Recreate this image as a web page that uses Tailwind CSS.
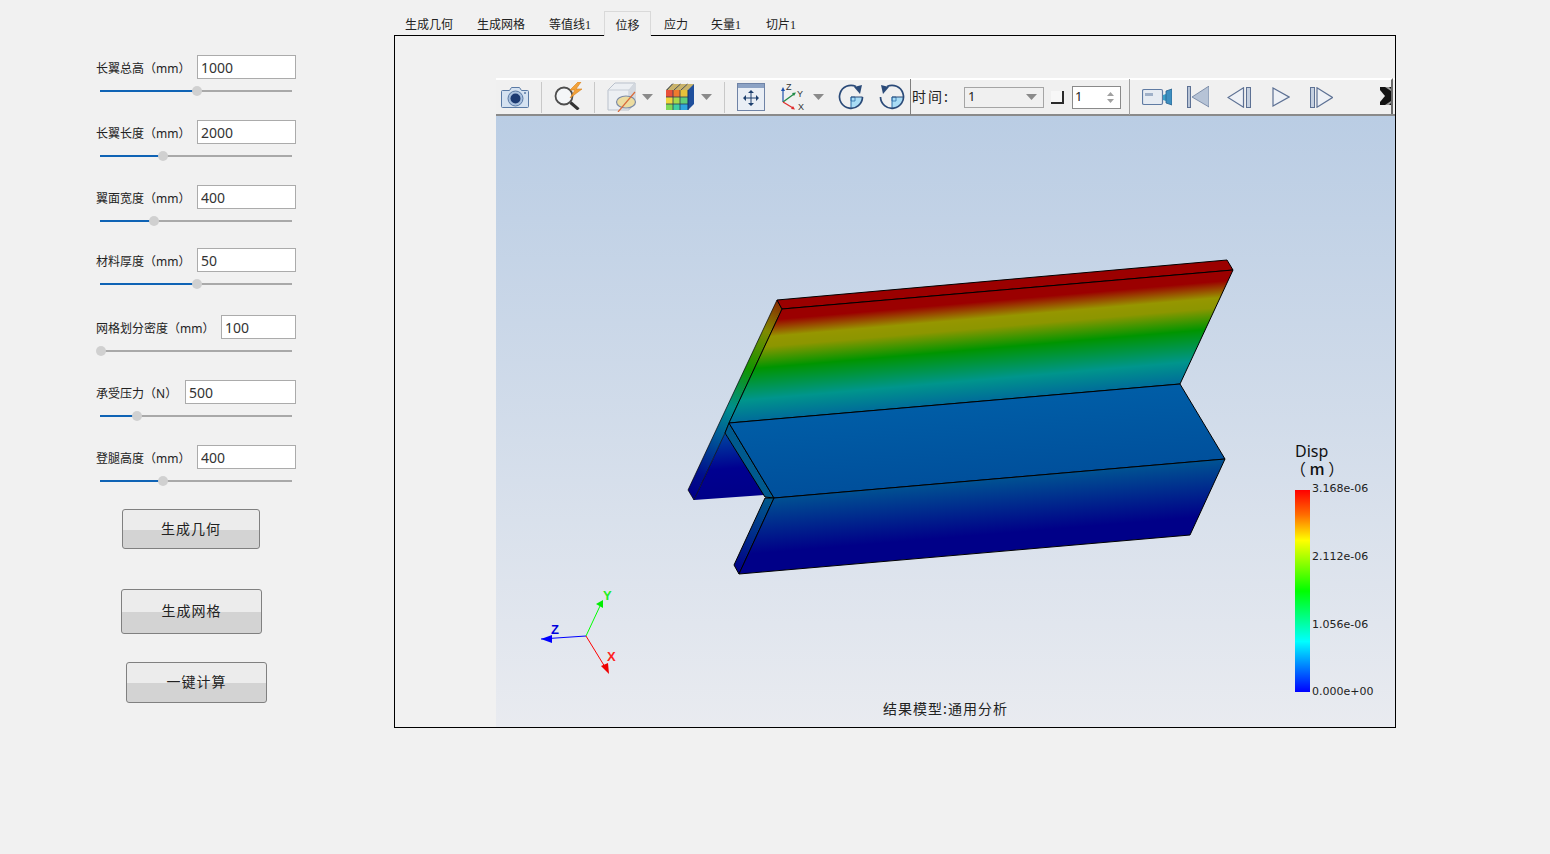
<!DOCTYPE html>
<html lang="zh">
<head>
<meta charset="utf-8">
<script src="https://cdn.jsdelivr.net/npm/@tailwindcss/browser@4"></script>
</head>
<body class="m-0 w-[1550px] h-[854px] overflow-hidden bg-[#f1f1f1] text-[#222] font-['Noto_Sans_CJK_SC','Noto_Sans',sans-serif]">
<div class="flex h-full">
  <!-- left form -->
  <aside class="w-[394px] shrink-0 pt-[55px] pl-[96px]">
    <div class="w-[200px] flex flex-col">
      <div class="h-[48px]">
        <div class="h-[24px] flex items-center justify-between"><span class="text-[12px] pt-[2px]">长翼总高（<span class="font-['Noto_Sans']">mm</span>）</span><input readonly value="1000" class="w-[99px] h-[24px] border border-[#ababab] bg-white pl-[3px] text-[14px] text-[#333] font-['Noto_Sans'] outline-none"></div>
        <div class="relative h-[24px] ml-[4px] w-[192px] flex items-center"><div class="h-[2px] w-[97px] bg-[#0f63b5]"></div><div class="h-[2px] flex-1 bg-[#a9a9a9]"></div><div class="absolute left-[92px] top-[7px] size-[10px] rounded-full bg-[#d0d0d0]"></div></div>
      </div>
      <div class="h-[48px] mt-[17px]">
        <div class="h-[24px] flex items-center justify-between"><span class="text-[12px] pt-[2px]">长翼长度（<span class="font-['Noto_Sans']">mm</span>）</span><input readonly value="2000" class="w-[99px] h-[24px] border border-[#ababab] bg-white pl-[3px] text-[14px] text-[#333] font-['Noto_Sans'] outline-none"></div>
        <div class="relative h-[24px] ml-[4px] w-[192px] flex items-center"><div class="h-[2px] w-[63px] bg-[#0f63b5]"></div><div class="h-[2px] flex-1 bg-[#a9a9a9]"></div><div class="absolute left-[58px] top-[7px] size-[10px] rounded-full bg-[#d0d0d0]"></div></div>
      </div>
      <div class="h-[48px] mt-[17px]">
        <div class="h-[24px] flex items-center justify-between"><span class="text-[12px] pt-[2px]">翼面宽度（<span class="font-['Noto_Sans']">mm</span>）</span><input readonly value="400" class="w-[99px] h-[24px] border border-[#ababab] bg-white pl-[3px] text-[14px] text-[#333] font-['Noto_Sans'] outline-none"></div>
        <div class="relative h-[24px] ml-[4px] w-[192px] flex items-center"><div class="h-[2px] w-[54px] bg-[#0f63b5]"></div><div class="h-[2px] flex-1 bg-[#a9a9a9]"></div><div class="absolute left-[49px] top-[7px] size-[10px] rounded-full bg-[#d0d0d0]"></div></div>
      </div>
      <div class="h-[48px] mt-[15px]">
        <div class="h-[24px] flex items-center justify-between"><span class="text-[12px] pt-[2px]">材料厚度（<span class="font-['Noto_Sans']">mm</span>）</span><input readonly value="50" class="w-[99px] h-[24px] border border-[#ababab] bg-white pl-[3px] text-[14px] text-[#333] font-['Noto_Sans'] outline-none"></div>
        <div class="relative h-[24px] ml-[4px] w-[192px] flex items-center"><div class="h-[2px] w-[97px] bg-[#0f63b5]"></div><div class="h-[2px] flex-1 bg-[#a9a9a9]"></div><div class="absolute left-[92px] top-[7px] size-[10px] rounded-full bg-[#d0d0d0]"></div></div>
      </div>
      <div class="h-[48px] mt-[19px]">
        <div class="h-[24px] flex items-center justify-between"><span class="text-[12px] pt-[2px]">网格划分密度（<span class="font-['Noto_Sans']">mm</span>）</span><input readonly value="100" class="w-[75px] h-[24px] border border-[#ababab] bg-white pl-[3px] text-[14px] text-[#333] font-['Noto_Sans'] outline-none"></div>
        <div class="relative h-[24px] ml-[4px] w-[192px] flex items-center"><div class="h-[2px] flex-1 bg-[#a9a9a9]"></div><div class="absolute left-[-4px] top-[7px] size-[10px] rounded-full bg-[#d0d0d0]"></div></div>
      </div>
      <div class="h-[48px] mt-[17px]">
        <div class="h-[24px] flex items-center justify-between"><span class="text-[12px] pt-[2px]">承受压力（<span class="font-['Noto_Sans']">N</span>）</span><input readonly value="500" class="w-[111px] h-[24px] border border-[#ababab] bg-white pl-[3px] text-[14px] text-[#333] font-['Noto_Sans'] outline-none"></div>
        <div class="relative h-[24px] ml-[4px] w-[192px] flex items-center"><div class="h-[2px] w-[37px] bg-[#0f63b5]"></div><div class="h-[2px] flex-1 bg-[#a9a9a9]"></div><div class="absolute left-[32px] top-[7px] size-[10px] rounded-full bg-[#d0d0d0]"></div></div>
      </div>
      <div class="h-[48px] mt-[17px]">
        <div class="h-[24px] flex items-center justify-between"><span class="text-[12px] pt-[2px]">登腿高度（<span class="font-['Noto_Sans']">mm</span>）</span><input readonly value="400" class="w-[99px] h-[24px] border border-[#ababab] bg-white pl-[3px] text-[14px] text-[#333] font-['Noto_Sans'] outline-none"></div>
        <div class="relative h-[24px] ml-[4px] w-[192px] flex items-center"><div class="h-[2px] w-[63px] bg-[#0f63b5]"></div><div class="h-[2px] flex-1 bg-[#a9a9a9]"></div><div class="absolute left-[58px] top-[7px] size-[10px] rounded-full bg-[#d0d0d0]"></div></div>
      </div>
      <button class="mt-[16px] ml-[26px] w-[138px] h-[40px] pb-[2px] rounded-[3px] border border-[#808080] bg-[linear-gradient(#ececec_0,#ececec_52%,#d3d3d3_52%,#d3d3d3_100%)] text-[14px] tracking-[1px] text-[#222]">生成几何</button>
      <button class="mt-[40px] ml-[25px] w-[141px] h-[45px] pb-[2px] rounded-[3px] border border-[#808080] bg-[linear-gradient(#ececec_0,#ececec_51%,#d3d3d3_51%,#d3d3d3_100%)] text-[14px] tracking-[1px] text-[#222]">生成网格</button>
      <button class="mt-[28px] ml-[30px] w-[141px] h-[41px] pb-[2px] rounded-[3px] border border-[#808080] bg-[linear-gradient(#ececec_0,#ececec_52%,#d3d3d3_52%,#d3d3d3_100%)] text-[14px] tracking-[1px] text-[#222]">一键计算</button>
    </div>
  </aside>

  <!-- right side -->
  <main class="w-[1002px] shrink-0 pt-[11px] flex flex-col">
    <nav class="flex h-[25px] text-[12px] leading-[25px] relative z-10">
      <span class="pl-[11px] pr-3">生成几何</span>
      <span class="px-3">生成网格</span>
      <span class="pl-3 pr-[13px]">等值线<span class="font-['Liberation_Serif']">1</span></span>
      <span class="w-[47px] h-[25px] text-center border border-b-0 border-[#d9d9d9] bg-[#f1f1f1]">位移</span>
      <span class="pl-3 pr-[11px] ml-[1px]">应力</span>
      <span class="pl-3 pr-[13px]">矢量<span class="font-['Liberation_Serif']">1</span></span>
      <span class="px-3">切片<span class="font-['Liberation_Serif']">1</span></span>
    </nav>
    <section class="-mt-[1px] h-[693px] border border-black pl-[101px] flex flex-col justify-end">
      <!-- toolbar -->
      <div class="h-[38px] w-[899px] flex bg-[#f0f0f0] border-t-2 border-t-white border-b-2 border-b-[#8a8a8a] items-center shrink-0">
        <svg class="ml-[5px] shrink-0" width="28" height="24" viewBox="0 0 28 24"><path d="M1 5.500h7l2-3h8l2 3h6a1 1 0 0 1 1 1v15a1 1 0 0 1-1 1H1a1 1 0 0 1-1-1v-15a1 1 0 0 1 1-1z" transform="translate(.5 0)" fill="#d5e2f1" stroke="#5a7aa5"/><circle cx="14.500" cy="13.500" r="7.500" fill="#a9c0de" stroke="#5a7aa5"/><circle cx="14.500" cy="13.500" r="5" fill="#1c3a72"/><circle cx="24" cy="8" r="1" fill="#5a7aa5"/></svg>
        <div class="ml-[12px] w-[1px] h-[31px] bg-[#c8c8c8] shrink-0"></div>
        <svg class="ml-[10px] mt-[-2px] shrink-0" width="31" height="28" viewBox="0 0 31 28"><circle cx="12" cy="14" r="8.500" fill="#f4f6f8" stroke="#4d4d4d" stroke-width="1.800"/><path d="M18.500 20.500l8 7" stroke="#333" stroke-width="3"/><path d="M26 0l-8 8h5l-5 8 12-9h-6l5-7z" fill="#f2a23a" stroke="#d97f17" stroke-width=".6"/></svg>
        <div class="ml-[11px] w-[1px] h-[31px] bg-[#c8c8c8] shrink-0"></div>
        <svg class="ml-[12px] shrink-0" width="31" height="30" viewBox="0 0 31 30"><path d="M1 8l7-7h20v20l-6 7H1z" fill="#eceff3" stroke="#b9c1cc"/><path d="M1 8h21v20M22 8l6-7" fill="none" stroke="#c6ccd5"/><path d="M22 8l6-7v20l-6 7z" fill="#d3d8df"/><ellipse cx="19" cy="20" rx="9.500" ry="6" fill="#ecdca0" stroke="#7c8ba6" stroke-width="1.200"/><path d="M11 30L28 10" stroke="#d96a3a" stroke-width="1.200"/></svg>
        <svg class="ml-[4px] shrink-0" width="11" height="6" viewBox="0 0 11 6"><path d="M0 0h11l-5.500 6z" fill="#8a8a8a"/></svg>
        <svg class="ml-[13px] shrink-0" width="28" height="28" viewBox="0 0 28 28"><path d="M0 7l6-6h22v20l-6 6H0z" fill="#1f4f9c"/><path d="M0 7h7v7H0z" fill="#e8503a"/><path d="M7 7h7v7H7z" fill="#ef7a2e"/><path d="M14 7h8v7h-8z" fill="#e8c23a"/><path d="M0 14h7v7H0z" fill="#f0d53c"/><path d="M7 14h7v7H7z" fill="#a6d94b"/><path d="M14 14h8v7h-8z" fill="#5fcf7a"/><path d="M0 21h7v6H0z" fill="#7ed957"/><path d="M7 21h7v6H7z" fill="#3fcfa2"/><path d="M14 21h8v6h-8z" fill="#2ea6df"/><path d="M0 7l6-6h22l-6 6z" fill="#c9b36b"/><path d="M7 .500L1 7M14.500 1L8 7M21.500 1L15 7M0 14h22M0 21h22M7 7v20M14 7v20" stroke="#2d3a55" stroke-width=".8" fill="none"/><path d="M22 7v20" stroke="#10306b"/></svg>
        <svg class="ml-[7px] shrink-0" width="11" height="6" viewBox="0 0 11 6"><path d="M0 0h11l-5.500 6z" fill="#8a8a8a"/></svg>
        <div class="ml-[12px] w-[1px] h-[31px] bg-[#c8c8c8] shrink-0"></div>
        <svg class="ml-[12px] shrink-0" width="28" height="28" viewBox="0 0 28 28"><rect x=".5" y=".5" width="27" height="27" fill="#e9eef5" stroke="#6f83a6"/><rect x="1" y="1" width="26" height="4" fill="#8ca2c4"/><path d="M14 8v14M8 15h12" stroke="#1d3f6e"/><path d="M14 7l-3 3h6zM14 23l-3-3h6zM6 15l3-3v6zM22 15l-3-3v6z" fill="#1d3f6e"/></svg>
        <svg class="ml-[16px] shrink-0" width="24" height="28" viewBox="0 0 24 28"><path d="M2 19V7" stroke="#1f53ad" stroke-width="1.200"/><path d="M2 4L0 8h4z" fill="#1f53ad"/><path d="M2 19l11-8" stroke="#1f8a45" stroke-width="1.200"/><path d="M15 9.500l-4 .5 2 3z" fill="#1f8a45"/><path d="M2 19l10 6" stroke="#e02c2c" stroke-width="1.200"/><path d="M14 26.500l-4-.5 2-3z" fill="#e02c2c"/><text x="5" y="7" font-size="9" font-family="Liberation Sans" fill="#333">Z</text><text x="16" y="14" font-size="9" font-family="Liberation Sans" fill="#333">Y</text><text x="17" y="27" font-size="9" font-family="Liberation Sans" fill="#333">X</text></svg>
        <svg class="ml-[8px] shrink-0" width="11" height="6" viewBox="0 0 11 6"><path d="M0 0h11l-5.500 6z" fill="#8a8a8a"/></svg>
        <svg class="ml-[14px] shrink-0" width="26" height="26" viewBox="0 0 26 26"><path d="M13 13h11a11 11 0 0 1-11 11z" fill="#a9dcf5"/><path d="M13 13h4v4h-4z" fill="none" stroke="#2f6fa8" stroke-width=".8"/><path d="M13 13v11" stroke="#2f6fa8"/><path d="M18 2.500A11.500 11.500 0 1 0 24.500 13" fill="none" stroke="#2a4a78" stroke-width="1.700"/><path d="M13 13h11.500" stroke="#2a4a78"/><path d="M24 1l-2 9-6-7z" fill="#2a4a78"/></svg>
        <svg class="ml-[15px] shrink-0" width="26" height="26" viewBox="0 0 26 26"><path d="M13 13h11a11 11 0 0 1-11 11z" fill="#a9dcf5"/><path d="M13 13h4v4h-4z" fill="none" stroke="#2f6fa8" stroke-width=".8"/><path d="M13 13v11" stroke="#2f6fa8"/><path d="M8 2.500A11.500 11.500 0 1 1 1.500 13" fill="none" stroke="#2a4a78" stroke-width="1.700"/><path d="M13 13h11.500" stroke="#2a4a78"/><path d="M2 1l2 9 6-7z" fill="#2a4a78"/></svg>
        <div class="ml-[5px] w-[1px] h-[36px] bg-[#7f7f7f] shrink-0"></div>
        <span class="ml-[1px] w-[37px] text-[14px] tracking-[2px] leading-[20px] -mt-[2px] whitespace-nowrap shrink-0">时间:</span>
        <div class="ml-[15px] w-[80px] h-[21px] border border-[#a5a5a5] bg-[#f0f0f0] flex items-center justify-between pl-[3px] pr-[6px] text-[13px] font-['Noto_Sans'] shrink-0"><span>1</span><svg width="11" height="6" viewBox="0 0 11 6"><path d="M0 0h11l-5.500 6z" fill="#8a8a8a"/></svg></div>
        <div class="ml-[7px] w-[13px] h-[13px] border-r-2 border-b-2 border-[#2a2a2a] bg-[#f7f7f7] shrink-0"></div>
        <div class="ml-[8px] w-[49px] h-[23px] border border-[#8a8a8a] bg-white flex items-center justify-between pl-[2px] pr-[6px] text-[13px] font-['Noto_Sans'] shrink-0"><span>1</span><svg width="7" height="11" viewBox="0 0 7 11"><path d="M3.500 0L7 4H0zM3.500 11L0 7h7z" fill="#a0a0a0"/></svg></div>
        <div class="ml-[8px] w-[1px] h-[36px] bg-[#a0a0a0] shrink-0"></div>
        <div class="relative ml-[8px] h-[36px] w-[255px] shrink-0 flex items-center border-t-2 border-t-white border-r-2 border-r-[#6a6a6a] -mt-[2px]">
          <svg class="ml-[4px] shrink-0" width="30" height="18" viewBox="0 0 30 18"><rect x=".5" y="1.500" width="20" height="15" rx="1.500" fill="#e6ebf2" stroke="#5f7ba3" stroke-width="1.200"/><rect x="3" y="5" width="8" height="3" fill="#9fb0c8"/><path d="M21 7l3-1v7l-3-1z" fill="#3aa0c9"/><path d="M24 3l6-2v16l-6-2z" fill="#3d8fc0" stroke="#2a5f8d" stroke-width=".8"/></svg>
          <svg class="ml-[15px] shrink-0" width="22" height="22" viewBox="0 0 22 22"><rect x=".5" y=".5" width="3" height="21" fill="#b8c4d6" stroke="#5d7194"/><path d="M22 0v21L5 11z" fill="#b6c3d6" stroke="#5d7194" stroke-width=".7"/></svg>
          <svg class="ml-[18px] shrink-0" width="24" height="21" viewBox="0 0 24 21"><path d="M16.500 .8v19.400L1 10.500z" fill="#eef1f6" stroke="#5d7194" stroke-width="1.200"/><rect x="19.500" y=".5" width="4" height="20" fill="#c5d0e0" stroke="#5d7194"/></svg>
          <svg class="ml-[21px] shrink-0" width="18" height="20" viewBox="0 0 18 20"><path d="M1 1v18l16-9z" fill="#eef1f6" stroke="#5d7194" stroke-width="1.200"/></svg>
          <svg class="ml-[20px] shrink-0" width="23" height="21" viewBox="0 0 23 21"><rect x=".5" y=".5" width="4" height="20" fill="#c5d0e0" stroke="#5d7194"/><path d="M7 .8v19.400L22.500 10.500z" fill="#eef1f6" stroke="#5d7194" stroke-width="1.200"/></svg>
          <svg class="absolute right-0 top-[7px]" width="11" height="18" viewBox="0 0 11 18"><rect x="0" y="0" width="11" height="18" fill="#111"/><path d="M0 3l5 6-5 6z" fill="#e8e8e8"/><path d="M5 0h4l2 2v2zM5 18h4l2-2v-2z" fill="#9a9a9a"/></svg>
        </div>
      </div>
      <!-- viewport -->
      <div class="relative h-[611px] w-[899px] shrink-0 bg-[linear-gradient(#bacde4_0%,#e9ebf0_100%)] overflow-hidden">
        <svg class="absolute left-0 top-0" width="899" height="611" viewBox="496 116 899 611">
          <defs>
            <linearGradient id="up" gradientUnits="userSpaceOnUse" x1="980" y1="292" x2="989.400" y2="401">
              <stop offset="0" stop-color="#9b0000"/><stop offset=".09" stop-color="#9b0000"/><stop offset=".24" stop-color="#969600"/><stop offset=".33" stop-color="#8c9600"/><stop offset=".52" stop-color="#009500"/><stop offset=".8" stop-color="#00958c"/><stop offset="1" stop-color="#006a9a"/>
            </linearGradient>
            <linearGradient id="mid" gradientUnits="userSpaceOnUse" x1="980" y1="402" x2="986" y2="478">
              <stop offset="0" stop-color="#005da6"/><stop offset="1" stop-color="#00509c"/>
            </linearGradient>
            <linearGradient id="low" gradientUnits="userSpaceOnUse" x1="980" y1="480" x2="986" y2="553">
              <stop offset="0" stop-color="#005292"/><stop offset=".75" stop-color="#000088"/><stop offset="1" stop-color="#000088"/>
            </linearGradient>
            <linearGradient id="ls" gradientUnits="userSpaceOnUse" x1="778" y1="302" x2="690" y2="492">
              <stop offset="0" stop-color="#8a2a00"/><stop offset=".15" stop-color="#808a00"/><stop offset=".35" stop-color="#109500"/><stop offset=".55" stop-color="#008f8c"/><stop offset=".7" stop-color="#005a98"/><stop offset=".9" stop-color="#000f8c"/><stop offset="1" stop-color="#000088"/>
            </linearGradient>
            <linearGradient id="ls2" gradientUnits="userSpaceOnUse" x1="768" y1="498" x2="736" y2="570">
              <stop offset="0" stop-color="#005a8c"/><stop offset="1" stop-color="#000088"/>
            </linearGradient>
            <linearGradient id="tri" gradientUnits="userSpaceOnUse" x1="725" y1="433" x2="730" y2="498">
              <stop offset="0" stop-color="#0046a0"/><stop offset=".55" stop-color="#000090"/><stop offset="1" stop-color="#000088"/>
            </linearGradient>
          </defs>
          <g stroke="#000" stroke-width="1" stroke-linejoin="round">
            <polygon points="725,433 694,500 765,495" fill="url(#tri)" stroke="none"/>
            <polygon points="777,300 688,490 694,500 725,433 729,423 782,309" fill="url(#ls)" stroke-width=".7"/>
            <polygon points="725,433 765,497 774,498 729,423" fill="#005a8e"/>
            <polygon points="765,498 734,565 739,574 774,498" fill="url(#ls2)"/>
            <polygon points="777,300 1227,260 1233,270 782,309" fill="#9b0000"/>
            <polygon points="782,309 1233,270 1180,384 729,423" fill="url(#up)"/>
            <polygon points="729,423 1180,384 1225,459 774,498" fill="url(#mid)"/>
            <polygon points="774,498 1225,459 1190,535 739,574" fill="url(#low)"/>
          </g>
          <!-- triad -->
          <g fill="none">
            <path d="M586 636L541 639" stroke="#0000ff"/>
            <path d="M586 636L600 606" stroke="#00ff00"/>
            <path d="M586 636L605 667" stroke="#ff0000"/>
          </g>
          <path d="M541 639l11-4v8z" fill="#0000ff"/>
          <path d="M596 604l7-4v8z" fill="#00ee00"/>
          <path d="M601 666l7-3 1 11z" fill="#ee0000"/>
          <text x="551" y="634" font-size="13" font-weight="700" font-family="Liberation Sans" fill="#0000dd">Z</text>
          <text x="603" y="600" font-size="13" font-weight="700" font-family="Liberation Sans" fill="#22ee22">Y</text>
          <text x="607" y="661" font-size="13" font-weight="700" font-family="Liberation Sans" fill="#ff2222">X</text>
        </svg>
        <div class="absolute left-[799px] top-[327px] text-[16px] leading-[17px] font-['Noto_Sans'] text-[#111]">Disp</div>
        <div class="absolute left-[794px] top-[344px] text-[16px] leading-[17px] font-['Noto_Sans_CJK_SC'] text-[#111] whitespace-nowrap">（ <span class="font-medium">m</span> ）</div>
        <div class="absolute left-[799px] top-[374px] w-[15px] h-[202px] bg-[linear-gradient(#ff0000_0%,#ff6a00_12%,#ffff00_25%,#00ff00_50%,#00ffff_75%,#0000ff_100%)]"></div>
        <div class="absolute left-[816px] top-[365px] text-[11px] leading-[16px] font-['DejaVu_Sans'] text-[#222]">3.168e-06</div>
        <div class="absolute left-[816px] top-[433px] text-[11px] leading-[16px] font-['DejaVu_Sans'] text-[#222]">2.112e-06</div>
        <div class="absolute left-[816px] top-[501px] text-[11px] leading-[16px] font-['DejaVu_Sans'] text-[#222]">1.056e-06</div>
        <div class="absolute left-[816px] top-[568px] text-[11px] leading-[16px] font-['DejaVu_Sans'] text-[#222]">0.000e+00</div>
        <div class="absolute left-[387px] top-[582px] text-[14px] leading-[20px] tracking-[1px] text-[#222] whitespace-nowrap">结果模型:通用分析</div>
      </div>
    </section>
  </main>
</div>
</body>
</html>
